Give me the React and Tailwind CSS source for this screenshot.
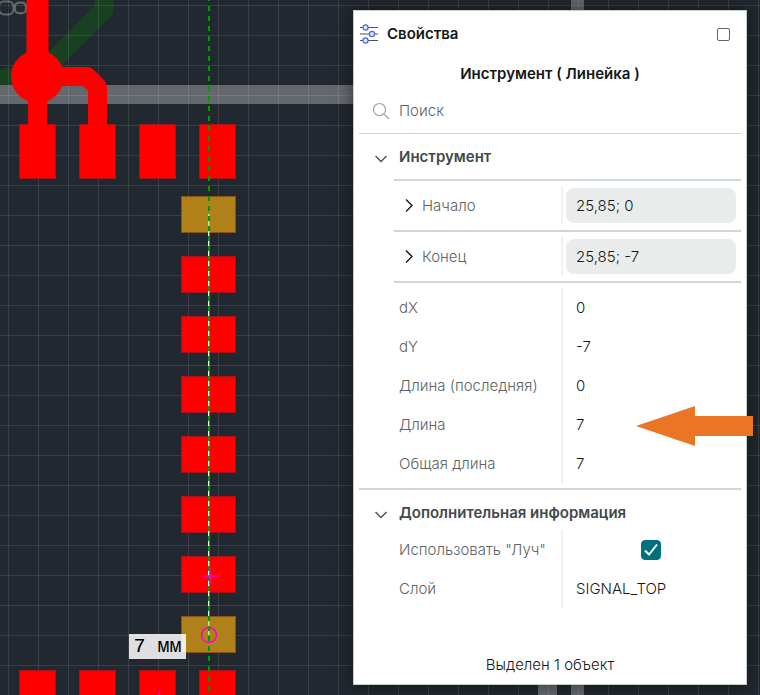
import { useState } from 'react'

const topPads = [19, 79, 139, 199]
const columnPads = [196, 256, 316, 376, 436, 496, 556, 616]

function Board() {
  return (
    <svg className="absolute inset-0 h-full w-full" aria-hidden="true">
      <defs>
        <pattern id="grid" width="30" height="30" x="8" y="5" patternUnits="userSpaceOnUse">
          <path d="M0.5 0V30M0 0.5H30" stroke="#ffffff" strokeOpacity="0.1" />
        </pattern>
      </defs>

      {/* inner layer track */}
      <path d="M104 -10V10L37 77H8L-12 86" fill="none" stroke="#1a4022" strokeWidth="19" strokeLinejoin="round" />

      {/* silkscreen */}
      <g fill="none" stroke="#62676c" strokeWidth="2.2">
        <rect x="-1" y="1.5" width="14.5" height="13" rx="5" />
        <rect x="15" y="2.7" width="11" height="10.5" rx="4" />
      </g>
      <rect x="0" y="85" width="600" height="19" fill="#64686d" />
      <rect x="571" y="0" width="13" height="100%" fill="#64686d" />
      <rect x="538" y="400" width="19" height="100%" fill="#64686d" />

      <rect width="100%" height="100%" fill="url(#grid)" />

      {/* top layer copper */}
      <g fill="none" stroke="#ff0000" strokeLinejoin="round">
        <path d="M37.5 -5V77" strokeWidth="22" />
        <path d="M37.5 77V130" strokeWidth="19" />
        <path d="M37 76.5H87L97.5 87V130" strokeWidth="19" />
      </g>
      <circle cx="37.5" cy="76.5" r="26.5" fill="#ff0000" />
      <g fill="#ff0000" stroke="#a8121a">
        {topPads.map(x => <rect key={x} x={x + 0.5} y="124.5" width="36" height="54" />)}
        {topPads.map(x => <rect key={x} x={x + 0.5} y="670.5" width="36" height="54" />)}
        {columnPads.map((y, i) => (
          <rect
            key={y}
            x="181.5"
            y={y + 0.5}
            width="54"
            height="36"
            fill={i === 0 || i === 7 ? '#b08019' : '#ff0000'}
            stroke={i === 0 || i === 7 ? '#8a521b' : '#a8121a'}
          />
        ))}
      </g>
      <path d="M97.5 110V128M37.5 110V128" stroke="#ff0000" strokeWidth="19" />

      {/* ray and ruler */}
      <path d="M209 214V635" stroke="#ffffff" strokeOpacity="0.35" strokeWidth="2" />
      <path d="M208.5 232V616" stroke="#ffffff" />
      <path d="M208.5 214V232M208.5 616V635" stroke="#b4f08c" />
      <path d="M209 -4V700" stroke="#009a00" strokeWidth="2" strokeDasharray="5 5" />
      <g fill="none" stroke="#ff00c8" strokeWidth="1.5">
        <path d="M202 576H218M210 568V584M159 692V700" />
        <circle cx="209" cy="635" r="7.5" />
      </g>
    </svg>
  )
}

function Section({ title, open, onToggle, children }) {
  return (
    <section>
      <h3>
        <button onClick={onToggle} aria-expanded={open} className="flex w-full items-center pb-[7px] pl-4 pt-[13px] text-left font-semibold text-[#3f4a4a]">
          <svg className={open ? 'mt-1 w-3' : 'mt-1 w-3 -rotate-90'} viewBox="0 0 12 8" fill="none" stroke="#4a5656" strokeWidth="1.5">
            <path d="M0.5 1L6 6.5L11.5 1" />
          </svg>
          <span className="ml-3">{title}</span>
        </button>
      </h3>
      {open && children}
    </section>
  )
}

function Row({ label, children }) {
  return (
    <div className="flex h-[39px] items-center pl-10">
      <div className="w-[162px] text-[#5c6464]">{label}</div>
      <div className="flex h-full flex-1 items-center border-l-2 border-[#f2edfb] pl-[13px] pr-[15px]">{children}</div>
    </div>
  )
}

function PointRow({ id, label, value }) {
  return (
    <div className="ml-[35px] flex h-[51px] items-center border-t-2 border-[#cbd8d6]">
      <div className="flex w-[167px] items-center pl-[11px]">
        <button aria-label={'Развернуть: ' + label}>
          <svg className="w-2" viewBox="0 0 8 13" fill="none" stroke="#222222" strokeWidth="1.5">
            <path d="M1 0.5L7 6.5L1 12.5" />
          </svg>
        </button>
        <label htmlFor={id} className="ml-[9px] text-[#5c6464]">{label}</label>
      </div>
      <div className="flex h-[39px] flex-1 items-center border-l-2 border-[#f2edfb] pl-[3px] pr-[5px]">
        <input id={id} defaultValue={value} className="h-[35px] w-full min-w-0 rounded-lg bg-[#eaeceb] px-[10px] text-[#141818] outline-none" />
      </div>
    </div>
  )
}

function App() {
  const [toolOpen, setToolOpen] = useState(true)
  const [extraOpen, setExtraOpen] = useState(true)
  const [useRay, setUseRay] = useState(true)

  return (
    <div className="relative flex min-h-screen overflow-hidden bg-[#22282f] py-[10px] pl-[353px] pr-[13px] font-['Inter',sans-serif] text-[15px] font-light leading-5 text-[#141818]">
      <Board />

      <div className="absolute left-[129px] top-[634px] flex h-[25px] w-[57px] items-center justify-center whitespace-nowrap bg-white/85 font-['Liberation_Mono',monospace] text-xl font-normal text-black">
        7 мм
      </div>

      <main className="relative flex min-w-0 flex-1 flex-col border border-[#c3cecd] bg-white px-[5px] shadow-[0_0_16px_rgba(0,0,0,0.5)]">
        <header className="flex h-[46px] items-center">
          <svg className="w-5" viewBox="0 0 20 20" fill="none">
            <path d="M1 3.5H19M1 10H19M1 16.5H19" stroke="#4a5656" strokeWidth="1.2" />
            <g fill="#dbe4ff" stroke="#4a68d8" strokeWidth="1.2">
              <circle cx="6.5" cy="3.5" r="2.6" />
              <circle cx="13" cy="10" r="2.6" />
              <circle cx="6.5" cy="16.5" r="2.6" />
            </g>
          </svg>
          <h1 className="ml-2 flex-1 font-semibold">Свойства</h1>
          <button aria-label="Развернуть окно" className="mr-[11px] h-[13px] w-[13px] rounded-xs border border-[#5f6868]"></button>
        </header>
        <h2 className="mt-[7px] text-center font-semibold">Инструмент ( Линейка )</h2>

        <div className="mt-1 flex h-[46px] items-center border-b border-[#cbd8d6] pl-[13px]">
          <svg className="w-[18px]" viewBox="0 0 18 18" fill="none" stroke="#9aa8a6" strokeWidth="1.2">
            <circle cx="7.5" cy="7.5" r="6" />
            <path d="M12 12L17 17" />
          </svg>
          <input type="search" aria-label="Поиск" placeholder="Поиск" className="ml-[9px] min-w-0 flex-1 outline-none placeholder:text-[#5c6464]" />
        </div>

        <Section title="Инструмент" open={toolOpen} onToggle={() => setToolOpen(!toolOpen)}>
          <div className="pt-[5px]">
            <PointRow id="start" label="Начало" value="25,85; 0" />
            <PointRow id="end" label="Конец" value="25,85; -7" />
            <div className="ml-[35px] border-t-2 border-[#cbd8d6]"></div>
          </div>
          <div className="py-[5px]">
            <Row label="dX">0</Row>
            <Row label="dY">-7</Row>
            <Row label="Длина (последняя)">0</Row>
            <Row label="Длина">7</Row>
            <Row label="Общая длина">7</Row>
          </div>
        </Section>

        <div className="border-t-2 border-[#cbd8d6]"></div>
        <Section title="Дополнительная информация" open={extraOpen} onToggle={() => setExtraOpen(!extraOpen)}>
          <Row label={<label htmlFor="ray">Использовать "Луч"</label>}>
            <div className="relative mx-auto h-5 w-5">
              <input id="ray" type="checkbox" checked={useRay} onChange={() => setUseRay(!useRay)} className="peer block h-5 w-5 appearance-none rounded border border-[#00707d] checked:bg-[#00707d]" />
              <svg className="pointer-events-none absolute inset-0 hidden peer-checked:block" viewBox="0 0 20 20" fill="none" stroke="#ffffff" strokeWidth="2">
                <path d="M4 10.5L8 14.5L16 4.5" />
              </svg>
            </div>
          </Row>
          <Row label="Слой">SIGNAL_TOP</Row>
        </Section>

        <footer className="mt-auto pb-[9px] text-center">Выделен 1 объект</footer>
      </main>

      <svg className="absolute right-[7px] top-[406px] w-[117px]" viewBox="0 0 117 40" aria-hidden="true">
        <path d="M0 20L59 0V10H117V30H59V40Z" fill="#ea7625" />
      </svg>
    </div>
  )
}

export default App
